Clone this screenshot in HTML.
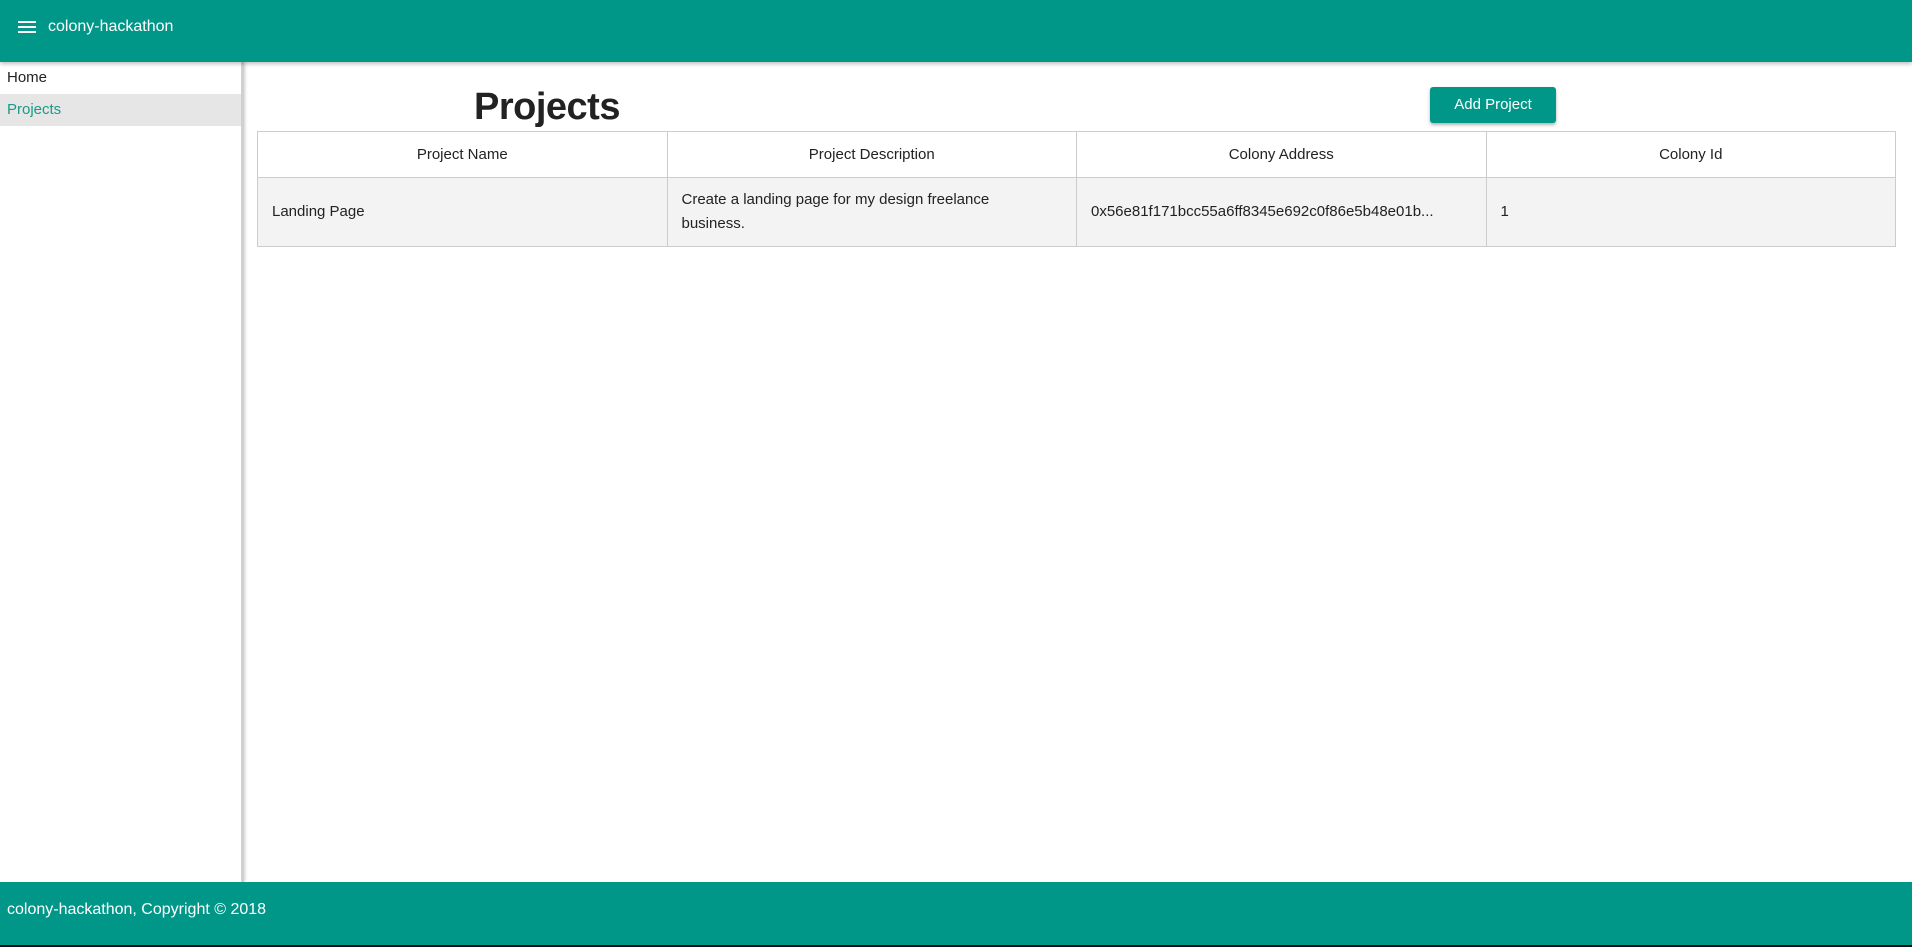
<!DOCTYPE html>
<html><head><style>
*{margin:0;padding:0;box-sizing:border-box}
body{width:1912px;height:947px;position:relative;overflow:hidden;background:#fff;font-family:"Liberation Sans",sans-serif;color:#222}
.hdr{position:absolute;left:0;top:0;width:1912px;height:62px;background:#009688;box-shadow:0 2px 4px rgba(0,0,0,.25);z-index:2}
.ham{position:absolute;left:18px;top:21px;width:18px}
.ham i{display:block;height:2px;background:#fff;margin-bottom:3px}
.ttl{position:absolute;left:48px;top:18px;color:#fff;font-size:16px}
.side{position:absolute;left:0;top:62px;width:244px;height:820px;border-right:3px solid #d0d0d0;box-shadow:1px 0 3px rgba(0,0,0,.2)}
.side div{height:32px;line-height:32px;padding-left:7px;font-size:15px}
.side .act{background:#e6e6e6;color:#1a9a8a}
h1{position:absolute;left:474px;top:86px;font-size:38px;font-weight:bold;color:#222;letter-spacing:-0.5px}
.btn{position:absolute;left:1430px;top:87px;width:126px;height:36px;background:#009688;color:#fff;border-radius:3px;font-size:15px;text-align:center;line-height:36px;box-shadow:0 2px 3px rgba(0,0,0,.3)}
table{position:absolute;left:257px;top:131px;width:1639px;border-collapse:collapse;font-size:15px}
td,th{border:1px solid #ccc;font-weight:normal;width:25%}
th{height:46px;text-align:center}
td{height:69px;background:#f3f3f3;padding:0 14px;line-height:24px}
.ftr{position:absolute;left:0;top:882px;width:1912px;height:63px;background:#009688;color:#fff;font-size:16px;padding:19px 7px}
.bot{position:absolute;left:0;top:945px;width:1912px;height:2px;background:#111}
</style></head><body>
<div class="hdr"><div class="ham"><i></i><i></i><i></i></div><div class="ttl">colony-hackathon</div></div>
<div class="side"><div>Home</div><div class="act">Projects</div></div>
<h1>Projects</h1>
<div class="btn">Add Project</div>
<table><tr><th>Project Name</th><th>Project Description</th><th>Colony Address</th><th>Colony Id</th></tr>
<tr><td>Landing Page</td><td>Create a landing page for my design freelance<br>business.</td><td>0x56e81f171bcc55a6ff8345e692c0f86e5b48e01b...</td><td>1</td></tr></table>
<div class="ftr">colony-hackathon, Copyright © 2018</div>
<div class="bot"></div>
</body></html>
